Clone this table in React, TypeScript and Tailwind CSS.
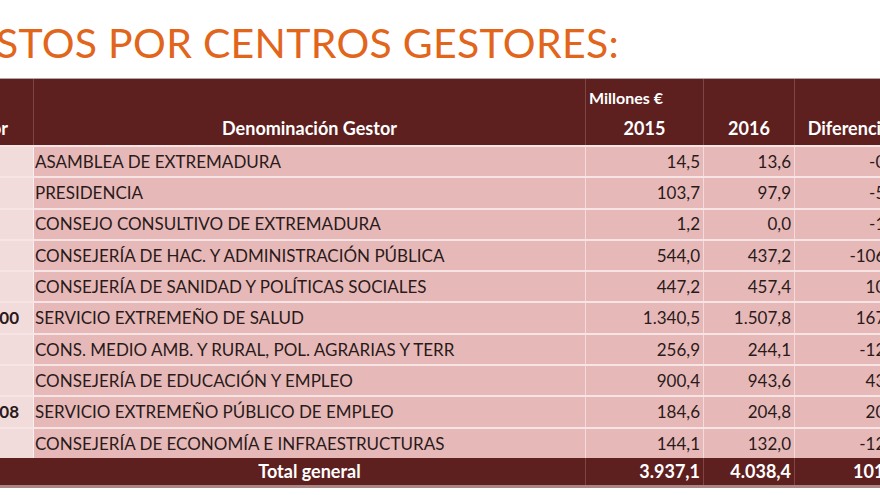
import React from 'react';

type Row = {
  code: string;
  name: string;
  y2015: string;
  y2016: string;
  diff: string;
};

const rows: Row[] = [
  { code: '', name: 'ASAMBLEA DE EXTREMADURA', y2015: '14,5', y2016: '13,6', diff: '-0,9' },
  { code: '', name: 'PRESIDENCIA', y2015: '103,7', y2016: '97,9', diff: '-5,8' },
  { code: '', name: 'CONSEJO CONSULTIVO DE EXTREMADURA', y2015: '1,2', y2016: '0,0', diff: '-1,2' },
  { code: '', name: 'CONSEJERÍA DE HAC. Y ADMINISTRACIÓN PÚBLICA', y2015: '544,0', y2016: '437,2', diff: '-106,8' },
  { code: '', name: 'CONSEJERÍA DE SANIDAD Y POLÍTICAS SOCIALES', y2015: '447,2', y2016: '457,4', diff: '10,2' },
  { code: '1100', name: 'SERVICIO EXTREMEÑO DE SALUD', y2015: '1.340,5', y2016: '1.507,8', diff: '167,3' },
  { code: '', name: 'CONS. MEDIO AMB. Y RURAL, POL. AGRARIAS Y TERR', y2015: '256,9', y2016: '244,1', diff: '-12,8' },
  { code: '', name: 'CONSEJERÍA DE EDUCACIÓN Y EMPLEO', y2015: '900,4', y2016: '943,6', diff: '43,2' },
  { code: '1308', name: 'SERVICIO EXTREMEÑO PÚBLICO DE EMPLEO', y2015: '184,6', y2016: '204,8', diff: '20,2' },
  { code: '', name: 'CONSEJERÍA DE ECONOMÍA E INFRAESTRUCTURAS', y2015: '144,1', y2016: '132,0', diff: '-12,1' },
];

export default function App() {
  return (
    <div className="w-[880px] h-[495px] bg-white overflow-hidden font-['Lato','Liberation_Sans',sans-serif]">
      <div className="h-[78px] pt-[22px] overflow-hidden">
        <div className="w-[619px] flex justify-end">
          <h1 className="shrink-0 text-[41px] leading-[42px] text-[#e2651c] tracking-[0.3px] whitespace-nowrap">
            GASTOS POR CENTROS GESTORES:
          </h1>
        </div>
      </div>
      <div className="border-t border-[#b0a8a8]">
        <div className="ml-[-60px] w-[963px] text-[17px] text-[#2a1a1a]">
          {/* header */}
          <div className="flex bg-[#5e1f1f] text-white font-bold text-[18px] h-[66px]">
            <div className="w-[94px] flex flex-col justify-end border-r border-[#7d4644]">
              <div className="h-[33px] flex items-center justify-end pr-[25px] whitespace-nowrap">Centro Gestor</div>
            </div>
            <div className="w-[552px] flex flex-col justify-end border-r border-[#7d4644]">
              <div className="h-[33px] flex items-center justify-center">Denominación Gestor</div>
            </div>
            <div className="w-[118px] flex flex-col border-r border-[#7d4644]">
              <div className="h-[33px] flex items-center pl-[3px] pt-[4px] text-[16px] whitespace-nowrap">Millones €</div>
              <div className="h-[33px] flex items-center justify-center">2015</div>
            </div>
            <div className="w-[91px] flex flex-col justify-end border-r border-[#7d4644]">
              <div className="h-[33px] flex items-center justify-center">2016</div>
            </div>
            <div className="w-[108px] flex flex-col justify-end">
              <div className="h-[33px] flex items-center justify-center">Diferencia</div>
            </div>
          </div>
          {/* body */}
          {rows.map((r) => (
            <div key={r.name} className="flex h-[31.3px] border-t-2 border-[#f7e4e4]">
              <div className="w-[94px] bg-[#f2dcdb] flex items-center justify-end pr-[14px] border-r border-[#fbeeee] font-bold">
                {r.code}
              </div>
              <div className="w-[552px] bg-[#e6b9b8] flex items-center pl-[1px] border-r border-[#f4dada] whitespace-nowrap">
                {r.name}
              </div>
              <div className="w-[118px] bg-[#e6b9b8] flex items-center justify-end pr-[3px] border-r border-[#f4dada]">
                {r.y2015}
              </div>
              <div className="w-[91px] bg-[#e6b9b8] flex items-center justify-end pr-[3px] border-r border-[#f4dada]">
                {r.y2016}
              </div>
              <div className="w-[108px] bg-[#e6b9b8] flex items-center justify-end pr-[4px]">
                {r.diff}
              </div>
            </div>
          ))}
          {/* total */}
          <div className="flex h-[30px] bg-[#5e1f1f] text-white font-bold text-[18px] border-b-[3px] border-[#a98584]">
            <div className="w-[94px]" />
            <div className="w-[552px] flex items-center justify-center border-r border-[#7d4644]">Total general</div>
            <div className="w-[118px] flex items-center justify-end pr-[3px] border-r border-[#7d4644]">3.937,1</div>
            <div className="w-[91px] flex items-center justify-end pr-[3px] border-r border-[#7d4644]">4.038,4</div>
            <div className="w-[108px] flex items-center justify-end pr-[4px]">101,3</div>
          </div>
        </div>
      </div>
    </div>
  );
}
